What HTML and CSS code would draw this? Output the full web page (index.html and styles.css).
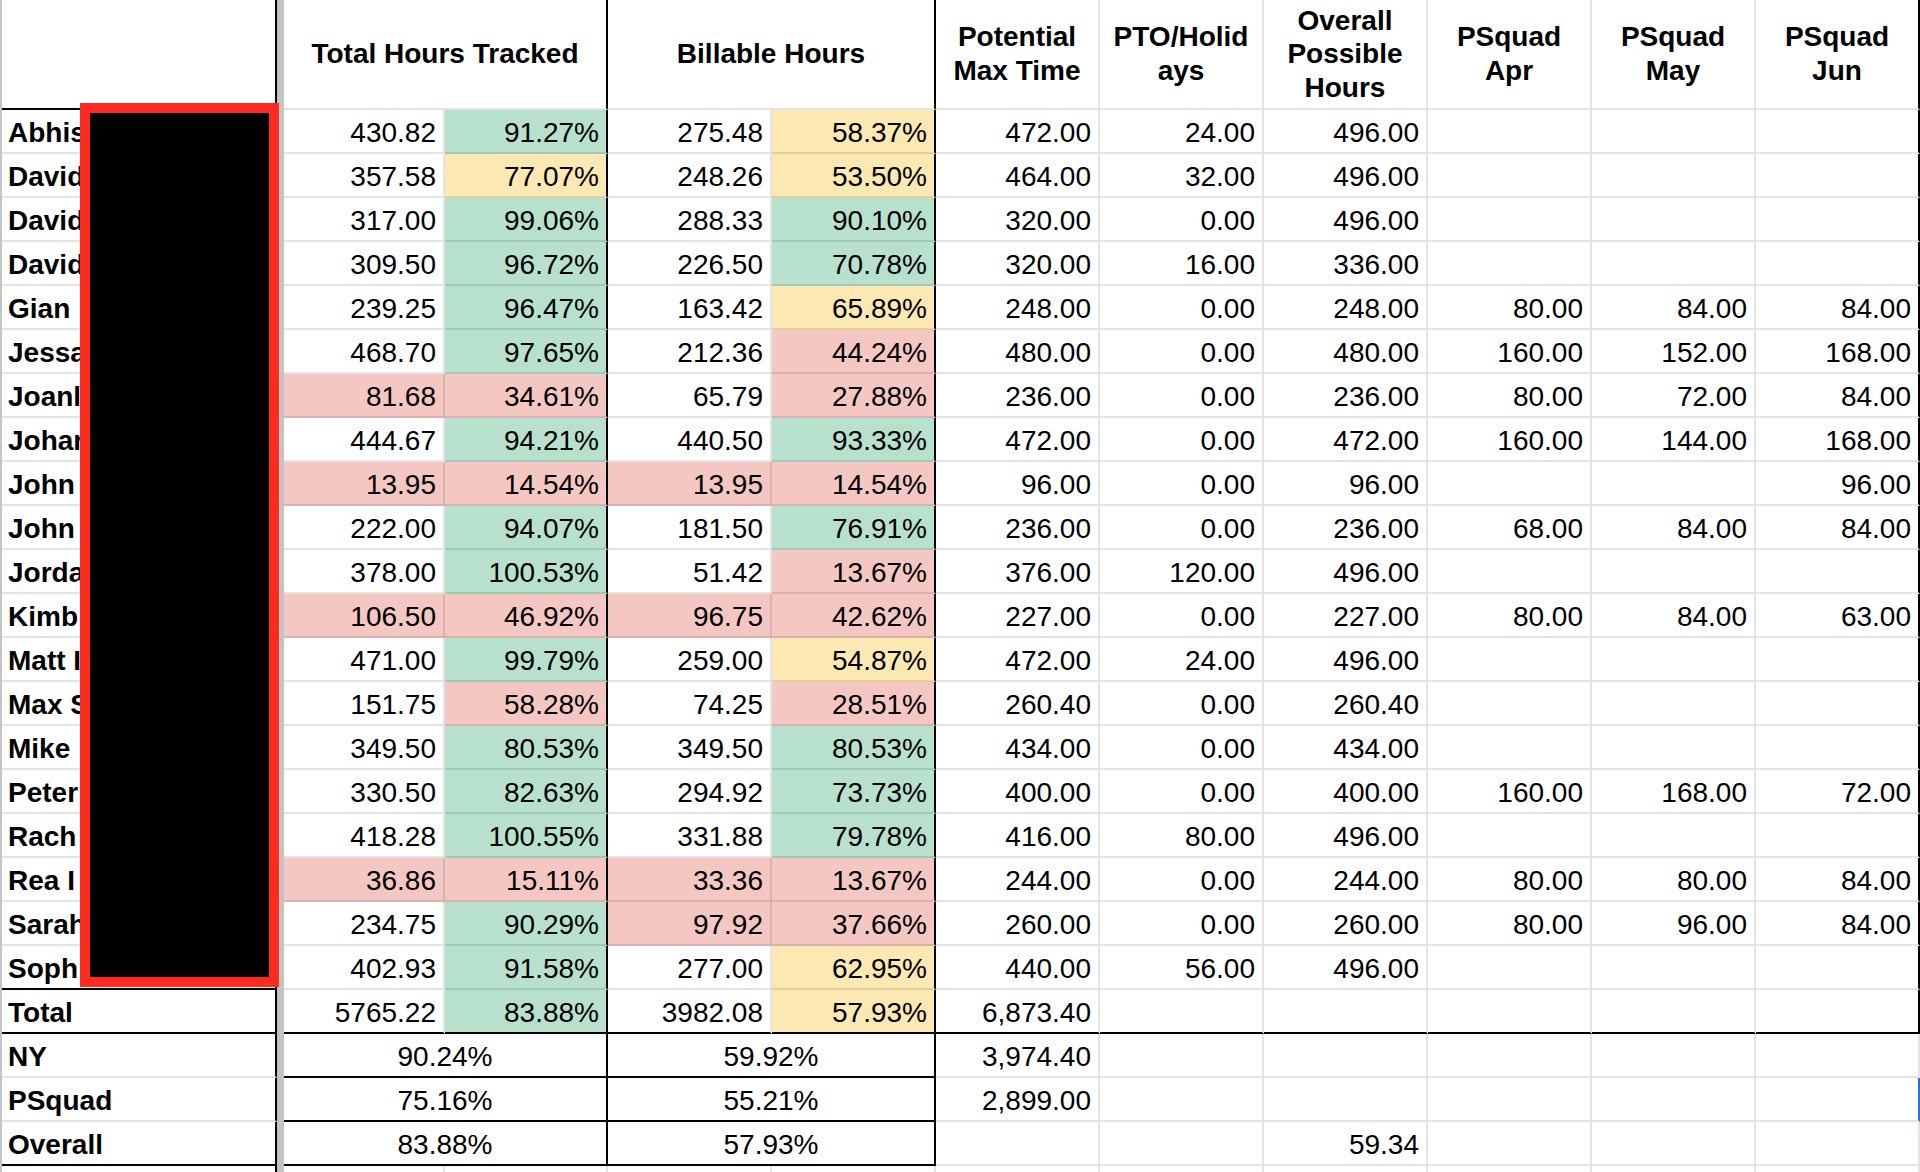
FILE: index.html
```html
<!DOCTYPE html>
<html lang="en">
<head>
<meta charset="utf-8">
<title>Hours Report</title>
<link rel="stylesheet" href="styles.css">
</head>
<body>
<div class="sheet">
  <div class="freeze"></div>

  <!-- header -->
  <div class="cell name br bb"></div>
  <div class="cell head span2 br">Total Hours Tracked</div>
  <div class="cell head span2 br">Billable Hours</div>
  <div class="cell head">Potential<br>Max Time</div>
  <div class="cell head">PTO/Holid<br>ays</div>
  <div class="cell head">Overall<br>Possible<br>Hours</div>
  <div class="cell head">PSquad<br>Apr</div>
  <div class="cell head">PSquad<br>May</div>
  <div class="cell head br">PSquad<br>Jun</div>

  <div class="cell name">Abhis</div><div class="cell">430.82</div><div class="cell g br">91.27%</div><div class="cell">275.48</div><div class="cell y br">58.37%</div><div class="cell">472.00</div><div class="cell">24.00</div><div class="cell">496.00</div><div class="cell"></div><div class="cell"></div><div class="cell br"></div>
  <div class="cell name">David</div><div class="cell">357.58</div><div class="cell y br">77.07%</div><div class="cell">248.26</div><div class="cell y br">53.50%</div><div class="cell">464.00</div><div class="cell">32.00</div><div class="cell">496.00</div><div class="cell"></div><div class="cell"></div><div class="cell br"></div>
  <div class="cell name">David</div><div class="cell">317.00</div><div class="cell g br">99.06%</div><div class="cell">288.33</div><div class="cell g br">90.10%</div><div class="cell">320.00</div><div class="cell">0.00</div><div class="cell">496.00</div><div class="cell"></div><div class="cell"></div><div class="cell br"></div>
  <div class="cell name">David</div><div class="cell">309.50</div><div class="cell g br">96.72%</div><div class="cell">226.50</div><div class="cell g br">70.78%</div><div class="cell">320.00</div><div class="cell">16.00</div><div class="cell">336.00</div><div class="cell"></div><div class="cell"></div><div class="cell br"></div>
  <div class="cell name">Gian</div><div class="cell">239.25</div><div class="cell g br">96.47%</div><div class="cell">163.42</div><div class="cell y br">65.89%</div><div class="cell">248.00</div><div class="cell">0.00</div><div class="cell">248.00</div><div class="cell">80.00</div><div class="cell">84.00</div><div class="cell br">84.00</div>
  <div class="cell name">Jessa</div><div class="cell">468.70</div><div class="cell g br">97.65%</div><div class="cell">212.36</div><div class="cell r br">44.24%</div><div class="cell">480.00</div><div class="cell">0.00</div><div class="cell">480.00</div><div class="cell">160.00</div><div class="cell">152.00</div><div class="cell br">168.00</div>
  <div class="cell name">Joanl</div><div class="cell r">81.68</div><div class="cell r br">34.61%</div><div class="cell">65.79</div><div class="cell r br">27.88%</div><div class="cell">236.00</div><div class="cell">0.00</div><div class="cell">236.00</div><div class="cell">80.00</div><div class="cell">72.00</div><div class="cell br">84.00</div>
  <div class="cell name">Johar</div><div class="cell">444.67</div><div class="cell g br">94.21%</div><div class="cell">440.50</div><div class="cell g br">93.33%</div><div class="cell">472.00</div><div class="cell">0.00</div><div class="cell">472.00</div><div class="cell">160.00</div><div class="cell">144.00</div><div class="cell br">168.00</div>
  <div class="cell name">John</div><div class="cell r">13.95</div><div class="cell r br">14.54%</div><div class="cell r">13.95</div><div class="cell r br">14.54%</div><div class="cell">96.00</div><div class="cell">0.00</div><div class="cell">96.00</div><div class="cell"></div><div class="cell"></div><div class="cell br">96.00</div>
  <div class="cell name">John</div><div class="cell">222.00</div><div class="cell g br">94.07%</div><div class="cell">181.50</div><div class="cell g br">76.91%</div><div class="cell">236.00</div><div class="cell">0.00</div><div class="cell">236.00</div><div class="cell">68.00</div><div class="cell">84.00</div><div class="cell br">84.00</div>
  <div class="cell name">Jorda</div><div class="cell">378.00</div><div class="cell g br">100.53%</div><div class="cell">51.42</div><div class="cell r br">13.67%</div><div class="cell">376.00</div><div class="cell">120.00</div><div class="cell">496.00</div><div class="cell"></div><div class="cell"></div><div class="cell br"></div>
  <div class="cell name">Kimb</div><div class="cell r">106.50</div><div class="cell r br">46.92%</div><div class="cell r">96.75</div><div class="cell r br">42.62%</div><div class="cell">227.00</div><div class="cell">0.00</div><div class="cell">227.00</div><div class="cell">80.00</div><div class="cell">84.00</div><div class="cell br">63.00</div>
  <div class="cell name">Matt I</div><div class="cell">471.00</div><div class="cell g br">99.79%</div><div class="cell">259.00</div><div class="cell y br">54.87%</div><div class="cell">472.00</div><div class="cell">24.00</div><div class="cell">496.00</div><div class="cell"></div><div class="cell"></div><div class="cell br"></div>
  <div class="cell name">Max S</div><div class="cell">151.75</div><div class="cell r br">58.28%</div><div class="cell">74.25</div><div class="cell r br">28.51%</div><div class="cell">260.40</div><div class="cell">0.00</div><div class="cell">260.40</div><div class="cell"></div><div class="cell"></div><div class="cell br"></div>
  <div class="cell name">Mike</div><div class="cell">349.50</div><div class="cell g br">80.53%</div><div class="cell">349.50</div><div class="cell g br">80.53%</div><div class="cell">434.00</div><div class="cell">0.00</div><div class="cell">434.00</div><div class="cell"></div><div class="cell"></div><div class="cell br"></div>
  <div class="cell name">Peter</div><div class="cell">330.50</div><div class="cell g br">82.63%</div><div class="cell">294.92</div><div class="cell g br">73.73%</div><div class="cell">400.00</div><div class="cell">0.00</div><div class="cell">400.00</div><div class="cell">160.00</div><div class="cell">168.00</div><div class="cell br">72.00</div>
  <div class="cell name">Rach</div><div class="cell">418.28</div><div class="cell g br">100.55%</div><div class="cell">331.88</div><div class="cell g br">79.78%</div><div class="cell">416.00</div><div class="cell">80.00</div><div class="cell">496.00</div><div class="cell"></div><div class="cell"></div><div class="cell br"></div>
  <div class="cell name">Rea I</div><div class="cell r">36.86</div><div class="cell r br">15.11%</div><div class="cell r">33.36</div><div class="cell r br">13.67%</div><div class="cell">244.00</div><div class="cell">0.00</div><div class="cell">244.00</div><div class="cell">80.00</div><div class="cell">80.00</div><div class="cell br">84.00</div>
  <div class="cell name">Sarah</div><div class="cell">234.75</div><div class="cell g br">90.29%</div><div class="cell r">97.92</div><div class="cell r br">37.66%</div><div class="cell">260.00</div><div class="cell">0.00</div><div class="cell">260.00</div><div class="cell">80.00</div><div class="cell">96.00</div><div class="cell br">84.00</div>
  <div class="cell name bb">Soph</div><div class="cell">402.93</div><div class="cell g br">91.58%</div><div class="cell">277.00</div><div class="cell y br">62.95%</div><div class="cell">440.00</div><div class="cell">56.00</div><div class="cell">496.00</div><div class="cell"></div><div class="cell"></div><div class="cell br"></div>

  <!-- total -->
  <div class="cell name bb">Total</div><div class="cell bb">5765.22</div><div class="cell g br bb">83.88%</div><div class="cell bb">3982.08</div><div class="cell y br bb">57.93%</div><div class="cell bb">6,873.40</div><div class="cell bb"></div><div class="cell bb"></div><div class="cell bb"></div><div class="cell bb"></div><div class="cell br bb"></div>

  <!-- summary -->
  <div class="cell name">NY</div><div class="cell span2 ctr br bb">90.24%</div><div class="cell span2 ctr br bb">59.92%</div><div class="cell">3,974.40</div><div class="cell"></div><div class="cell"></div><div class="cell"></div><div class="cell"></div><div class="cell"></div>
  <div class="cell name">PSquad</div><div class="cell span2 ctr br bb">75.16%</div><div class="cell span2 ctr br bb">55.21%</div><div class="cell">2,899.00</div><div class="cell"></div><div class="cell"></div><div class="cell"></div><div class="cell"></div><div class="cell sel"></div>
  <div class="cell name bb">Overall</div><div class="cell span2 ctr br bb">83.88%</div><div class="cell span2 ctr br bb">57.93%</div><div class="cell"></div><div class="cell"></div><div class="cell">59.34</div><div class="cell"></div><div class="cell"></div><div class="cell"></div>

  <!-- next row (partially visible) -->
  <div class="cell name"></div><div class="cell"></div><div class="cell"></div><div class="cell"></div><div class="cell"></div><div class="cell"></div><div class="cell"></div><div class="cell"></div><div class="cell"></div><div class="cell"></div><div class="cell"></div>

  <div class="redact"></div>
</div>
</body>
</html>
```

FILE: styles.css
```css
html, body {
  margin: 0;
  padding: 0;
  background: #ffffff;
  height: 1172px;
  overflow: hidden;
}

.sheet {
  position: relative;
  display: grid;
  grid-template-columns: 275px 7px 161px 163px repeat(8, 164px);
  grid-template-rows: 110px repeat(25, 44px);
  border-left: 2px solid #c4c4c4;
  font-family: "Liberation Sans", Arial, sans-serif;
  font-size: 28px;
  color: #000000;
}

.freeze {
  grid-column: 2;
  grid-row: 1 / -1;
  background: #c3c3c3;
}

.cell {
  box-sizing: border-box;
  display: flex;
  align-items: center;
  justify-content: flex-end;
  padding: 4px 7px 0 7px;
  border-right: 2px solid rgba(0, 0, 0, 0.11);
  border-bottom: 2px solid rgba(0, 0, 0, 0.11);
  white-space: nowrap;
  overflow: hidden;
  line-height: normal;
}

.name {
  justify-content: flex-start;
  padding-left: 6px;
  font-weight: bold;
  border-right-color: #000000;
}

.head {
  justify-content: center;
  text-align: center;
  font-weight: bold;
  line-height: 1.2;
  white-space: normal;
  padding: 0 4px;
}

.span2 {
  grid-column: span 2;
}

.ctr {
  justify-content: center;
}

.br {
  border-right-color: #000000;
}

.bb {
  border-bottom-color: #000000;
}

.g {
  background: #b7e1cd;
}

.y {
  background: #fce8b2;
}

.r {
  background: #f4c7c3;
}

.sel {
  border-right: 2px solid #2a6ee8;
}

.redact {
  position: absolute;
  left: 78px;
  top: 103px;
  width: 199px;
  height: 884px;
  box-sizing: border-box;
  border: 10px solid #fd2a1f;
  background: #000000;
}
```
